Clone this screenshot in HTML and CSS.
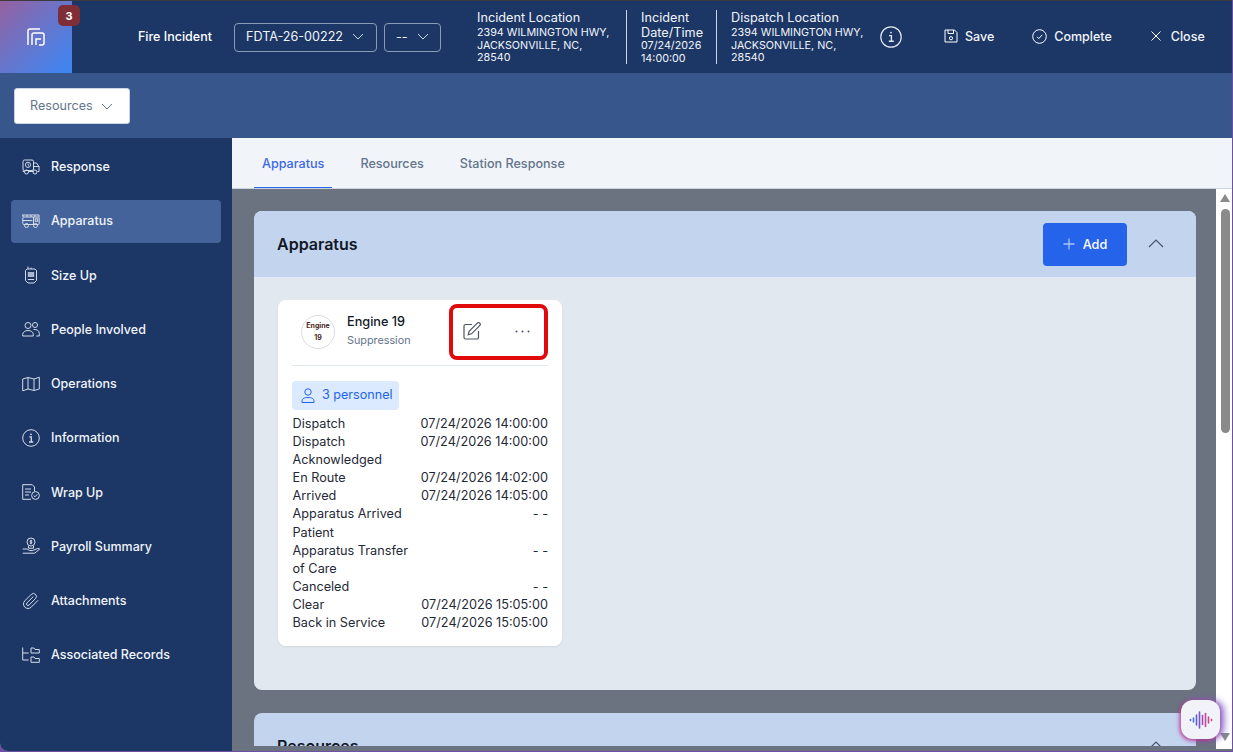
FILE: index.html
```html
<!DOCTYPE html>
<html lang="en">
<head>
<meta charset="utf-8">
<title>Fire Incident</title>
<link rel="stylesheet" href="styles.css">
</head>
<body>
<div class="app">
  <header class="topbar">
    <div class="logo">
      <svg class="logo-mark" viewBox="0 0 18 18" fill="none" stroke="#fff" stroke-width="1.5"><path d="M1 17V3a2 2 0 0 1 2-2h10"/><path d="M5 17V7a2 2 0 0 1 2-2h8a2 2 0 0 1 2 2v8a2 2 0 0 1-2 2h-3"/><path d="M9 17v-6h5"/></svg>
      <span class="badge">3</span>
    </div>
    <div class="title">Fire Incident</div>
    <button class="select select-id">FDTA-26-00222<svg class="chev" viewBox="0 0 12 7"><path d="M1 1l5 5 5-5"/></svg></button>
    <button class="select select-dash">--<svg class="chev" viewBox="0 0 12 7"><path d="M1 1l5 5 5-5"/></svg></button>
    <div class="info info-a">
      <div class="info-label">Incident Location</div>
      <div class="info-text">2394 WILMINGTON HWY, JACKSONVILLE, NC, 28540</div>
    </div>
    <div class="info info-b">
      <div class="info-label">Incident Date/Time</div>
      <div class="info-text">07/24/2026 14:00:00</div>
    </div>
    <div class="info info-c">
      <div class="info-label">Dispatch Location</div>
      <div class="info-text">2394 WILMINGTON HWY, JACKSONVILLE, NC, 28540</div>
    </div>
    <svg class="info-icon" viewBox="0 0 22 22" fill="none" stroke="#e2e8f0" stroke-width="1.2"><circle cx="11" cy="11" r="10.2"/><path d="M9 9.6h2.4v5.4M8.8 15.2h5" stroke-width="1.4"/><circle cx="11" cy="6.6" r=".9" fill="#e2e8f0" stroke="none"/></svg>
    <div class="action act-save">
      <svg viewBox="0 0 14 14" fill="none" stroke="#fff" stroke-width="1"><path d="M1 1h9.5L13 3.5V13H1z"/><path d="M4 1v3.5h5.5V1"/><circle cx="7" cy="9.2" r="1.6"/></svg>
      <span>Save</span>
    </div>
    <div class="action act-complete">
      <svg viewBox="0 0 15 15" fill="none" stroke="#fff" stroke-width="1"><circle cx="7.5" cy="7.5" r="6.8"/><path d="M5 7.8l1.8 1.8L10.2 5.8"/></svg>
      <span>Complete</span>
    </div>
    <div class="action act-close">
      <svg viewBox="0 0 12 12" fill="none" stroke="#fff" stroke-width="1"><path d="M1.5 1.5l9 9M10.5 1.5l-9 9"/></svg>
      <span>Close</span>
    </div>
  </header>

  <div class="subbar">
    <button class="res-btn">Resources<svg class="chev" viewBox="0 0 12 7"><path d="M1 1l5 5 5-5"/></svg></button>
  </div>

  <div class="body-row">
    <nav class="sidebar">
      <a class="nav-item">
        <svg viewBox="0 0 18 16"><rect x="1" y="1" width="10.5" height="10.5" rx="1.5"/><circle cx="6" cy="5.8" r="2.6"/><path d="M6 4.6v1.3l1 .6M11.5 4h3l2.5 3.5v5h-1.5M11.5 7.500h5.500M1 11.500v1h1.500M7 12.500h4.500"/><circle cx="4.500" cy="13" r="2"/><circle cx="13" cy="13" r="2"/></svg>
        <span>Response</span>
      </a>
      <a class="nav-item active">
        <svg viewBox="0 0 18 14"><path d="M0 1h17M1 3V1M5 3V1M9 3V1M13 3V1M17 3V1"/><rect x=".8" y="3" width="16.400" height="7.500" rx="1"/><path d="M.8 6.500h9.500M11.500 3v7.500"/><rect x="13.300" y="4.800" width="2.400" height="2.400"/><circle cx="4.500" cy="11.500" r="2"/><circle cx="13.500" cy="11.500" r="2"/></svg>
        <span>Apparatus</span>
      </a>
      <a class="nav-item">
        <svg viewBox="0 0 18 18"><path d="M6 3V.5M9 3V1.500"/><path d="M3.500 4.500L5 3h8l1.500 1.500v10L12 17H6l-2.500-2.500z"/><rect x="5.800" y="6" width="6.400" height="5" fill="#a9b6cd" stroke="none"/><path d="M5.800 13.500h6.400"/></svg>
        <span>Size Up</span>
      </a>
      <a class="nav-item">
        <svg viewBox="0 0 18 16"><circle cx="6" cy="4.500" r="3"/><circle cx="13" cy="4" r="2.500"/><path d="M.7 15v-1.500C.7 11 3 9.500 6 9.500s5.300 1.500 5.300 4V15zM11.500 8.500c3.500-.5 5.800 1.500 5.800 4V15h-3"/></svg>
        <span>People Involved</span>
      </a>
      <a class="nav-item">
        <svg viewBox="0 0 18 15"><path d="M.7 2.500L6 1l6 1.500L17.300.7v11.800L12 14l-6-1.500-5.300 1.800zM6 1v11.500M12 2.500V14"/></svg>
        <span>Operations</span>
      </a>
      <a class="nav-item">
        <svg viewBox="0 0 18 18"><circle cx="9" cy="9" r="8.300"/><path d="M7.300 7.800h2v5M7 13h4.200" stroke-width="1.300"/><circle cx="9" cy="5.300" r=".9" fill="#d5dce8" stroke="none"/></svg>
        <span>Information</span>
      </a>
      <a class="nav-item">
        <svg viewBox="0 0 18 16"><path d="M9 15.300H.7V.7h9.600l2.200 2.300V7.500"/><path d="M3 5h6M3 8h6M3 11h4"/><circle cx="13.500" cy="11.500" r="3.900"/><path d="M11.700 11.500l1.300 1.300 2.300-2.500"/></svg>
        <span>Wrap Up</span>
      </a>
      <a class="nav-item">
        <svg viewBox="0 0 18 17"><circle cx="9" cy="4.500" r="4"/><path d="M9 2.300v4.400M10.200 3.300H8.500a.8.800 0 0 0 0 1.200h1a.8.800 0 0 1 0 1.200H7.800M6.500 8.500v2.200h5V8.500M.7 11.500h4.500l2.500 1.500h3l5-2 2 .5-5 4.200H.7"/></svg>
        <span>Payroll Summary</span>
      </a>
      <a class="nav-item">
        <svg class="clip" viewBox="0 0 24 24"><path d="M21.440 11.050l-9.190 9.190a6 6 0 0 1-8.490-8.490l8.570-8.570A4 4 0 1 1 18 8.840l-8.590 8.570a2 2 0 0 1-2.830-2.830l8.490-8.480"/></svg>
        <span>Attachments</span>
      </a>
      <a class="nav-item">
        <svg viewBox="0 0 18 16"><path d="M.7.500v12.500h6M.7 6h6"/><path d="M9 1h3l1 1.500h4.300V6H9zM9 10h3l1 1.500h4.300V15.300H9z"/></svg>
        <span>Associated Records</span>
      </a>
    </nav>

    <main class="main">
      <div class="tabs">
        <div class="tab tab-active">Apparatus</div>
        <div class="tab">Resources</div>
        <div class="tab">Station Response</div>
      </div>
      <div class="scroll-row">
        <div class="content">
          <section class="panel panel-first">
            <div class="panel-head">
              <h2>Apparatus</h2>
              <button class="add-btn"><svg viewBox="0 0 12 12" fill="none" stroke="#a9c4f5" stroke-width="1.3"><path d="M6 .5v11M.5 6h11"/></svg>Add</button>
              <svg class="collapse" viewBox="0 0 16 9"><path d="M1 8l7-7 7 7"/></svg>
            </div>
            <div class="panel-body">
              <article class="card">
                <div class="card-head">
                  <div class="avatar"><span>Engine</span><span>19</span></div>
                  <div class="card-name">
                    <div class="name">Engine 19</div>
                    <div class="type">Suppression</div>
                  </div>
                  <div class="card-tools">
                    <svg class="edit" viewBox="0 0 18 18" fill="none" stroke="#4b5563" stroke-width="1.200"><path d="M9 2.500H2.500a1.500 1.500 0 0 0-1.500 1.500v11.500A1.500 1.500 0 0 0 2.500 17h11.500a1.500 1.500 0 0 0 1.500-1.500V9"/><path d="M14.300 1.200a1.500 1.500 0 0 1 2.400 2.400L8.500 11.800l-3.300.9.900-3.300z"/></svg>
                    <svg class="dots" viewBox="0 0 15 3" fill="#4b5563"><circle cx="1.500" cy="1.500" r="1"/><circle cx="7.500" cy="1.500" r="1"/><circle cx="13.500" cy="1.500" r="1"/></svg>
                  </div>
                </div>
                <div class="pill">
                  <svg viewBox="0 0 14 15" fill="none" stroke="#2563eb" stroke-width="1"><circle cx="7" cy="4" r="3.200"/><path d="M1 14.500v-1.500c0-2.500 2.500-3.500 6-3.500s6 1 6 3.500v1.500z"/></svg>
                  <span>3 personnel</span>
                </div>
                <dl class="times">
                  <dt>Dispatch</dt><dd>07/24/2026 14:00:00</dd>
                  <dt>Dispatch Acknowledged</dt><dd>07/24/2026 14:00:00</dd>
                  <dt>En Route</dt><dd>07/24/2026 14:02:00</dd>
                  <dt>Arrived</dt><dd>07/24/2026 14:05:00</dd>
                  <dt>Apparatus Arrived Patient</dt><dd>- -</dd>
                  <dt>Apparatus Transfer of Care</dt><dd>- -</dd>
                  <dt>Canceled</dt><dd>- -</dd>
                  <dt>Clear</dt><dd>07/24/2026 15:05:00</dd>
                  <dt>Back in Service</dt><dd>07/24/2026 15:05:00</dd>
                </dl>
              </article>
            </div>
          </section>
          <section class="panel">
            <div class="panel-head">
              <h2>Resources</h2>
              <svg class="collapse" viewBox="0 0 16 9"><path d="M1 8l7-7 7 7"/></svg>
            </div>
          </section>
        </div>
        <div class="scrollbar">
          <span class="arrow arrow-up"></span>
          <span class="thumb"></span>
          <span class="arrow arrow-down"></span>
        </div>
      </div>
    </main>
  </div>
  <button class="fab" aria-label="Voice">
    <svg viewBox="0 0 24 18" fill="none" stroke-width="1.600" stroke-linecap="round">
      <path d="M1.500 8.500v1" stroke="#4f6fe0"/><path d="M4.500 7v4" stroke="#4f6fe0"/><path d="M7.500 4v10" stroke="#5a60d8"/><path d="M10.500 1v16" stroke="#7a55c8"/><path d="M13.500 4.500v9" stroke="#a04cb0"/><path d="M16.500 2.500v13" stroke="#c0479f"/><path d="M19.500 6v6" stroke="#d0468f"/><path d="M22.500 8.500v1" stroke="#d8447f"/>
    </svg>
  </button>
</div>
</body>
</html>
```

FILE: styles.css
```css
* { box-sizing: border-box; }
html, body { margin: 0; height: 100%; overflow: hidden; }
body { background: #6d4fa5; font-family: Inter, "Liberation Sans", sans-serif; }
button { font-family: inherit; cursor: pointer; }

.app {
  position: relative;
  width: 1232px;
  height: 751px;
  border-top: 1px solid #3d3a3c;
  display: flex;
  flex-direction: column;
  overflow: hidden;
  border-bottom-left-radius: 8px;
}

/* top bar */
.topbar {
  height: 72px;
  flex: none;
  background: #1c3666;
  color: #fff;
  display: flex;
  align-items: center;
}
.logo {
  position: relative;
  width: 72px;
  height: 72px;
  flex: none;
  background: linear-gradient(135deg, #96619f 0%, #6a74c8 45%, #3b87f6 100%);
  display: flex;
  align-items: center;
  justify-content: center;
}
.logo-mark { width: 18px; height: 18px; }
.badge {
  position: absolute;
  left: 58px;
  top: 4px;
  width: 22px;
  height: 21px;
  border-radius: 5px;
  background: #7f2d36;
  font-size: 11px;
  font-weight: 700;
  display: flex;
  align-items: center;
  justify-content: center;
}
.title { margin: 0 0 2px 66px; width: 96px; flex: none; font-size: 12.5px; font-weight: 500; color: #fff; }
.select {
  height: 29px;
  flex: none;
  margin-top: 1px;
  background: transparent;
  border: 1px solid #8a9bb8;
  border-radius: 4px;
  color: #f1f5f9;
  font-size: 12.6px;
  display: flex;
  align-items: center;
  padding: 0 0 2px 11px;
}
.select-id { width: 143px; gap: 9px; }
.select-dash { width: 57px; margin-left: 7px; gap: 9px; }
.chev { width: 12px; height: 7px; fill: none; stroke: #cbd5e1; stroke-width: 1; flex: none; }

.info { flex: none; height: 54px; line-height: 15px; color: #f1f5f9; }
.info-label { font-size: 12.7px; }
.info-text { font-size: 10.75px; line-height: 12.5px; margin-top: 2px; }
.info-a { margin-left: 36px; width: 150px; padding: 0 10px 0 0; border-right: 1px solid #cbd5e1; }
.info-b { width: 90px; padding: 0 8px 0 14px; border-right: 1px solid #cbd5e1; }
.info-b .info-text { margin-top: -1px; line-height: 13px; }
.info-c { width: 148px; padding: 0 0 0 14px; }
.info-icon { width: 22px; height: 22px; flex: none; margin-left: 15px; }

.action { display: flex; align-items: center; gap: 7px; font-size: 12.5px; font-weight: 500; color: #f1f5f9; flex: none; margin-bottom: 2px; }
.act-save { margin-left: 42px; }
.act-save svg { width: 14px; height: 14px; }
.act-complete { margin-left: 38px; }
.act-complete svg { width: 15px; height: 15px; }
.act-close { margin-left: 38px; gap: 9px; }
.act-close svg { width: 12px; height: 12px; }

/* sub bar */
.subbar {
  height: 65px;
  flex: none;
  background: #37568c;
  display: flex;
  align-items: center;
  padding-left: 14px;
}
.res-btn {
  width: 116px;
  height: 36px;
  margin-top: 1px;
  background: #fff;
  border: 1px solid #cbd5e1;
  border-radius: 3px;
  color: #64748b;
  font-size: 12.6px;
  display: flex;
  align-items: center;
  padding: 0 0 2px 15px;
  gap: 8px;
}
.res-btn .chev { stroke: #64748b; margin-top: 2px; }

.body-row { flex: 1; display: flex; min-height: 0; background: #6b7280; }

/* sidebar */
.sidebar {
  width: 232px;
  flex: none;
  background: #1c3666;
  padding: 8px 11px 0;
  display: flex;
  flex-direction: column;
  gap: 11.25px;
  border-bottom-left-radius: 8px;
}
.nav-item {
  height: 43px;
  flex: none;
  display: flex;
  align-items: center;
  gap: 11px;
  padding-left: 11px;
  padding-bottom: 2px;
  border-radius: 4px;
  color: #f1f5f9;
  font-size: 12.5px;
  font-weight: 500;
}
.nav-item svg {
  width: 18px;
  height: 18px;
  flex: none;
  fill: none;
  stroke: #d5dce8;
  stroke-width: 1;
}
.nav-item svg.clip { stroke-width: 1.330; }
.nav-item.active { background: #44639a; }

/* main */
.main { flex: 1; min-width: 0; display: flex; flex-direction: column; }
.tabs {
  height: 51px;
  flex: none;
  background: #f1f5f9;
  border-bottom: 1px solid #cbd5e1;
  display: flex;
  padding-left: 22px;
}
.tab {
  height: 50px;
  padding: 0 8px;
  margin-right: 20px;
  display: flex;
  align-items: center;
  font-size: 12.6px;
  font-weight: 500;
  color: #64748b;
}
.tab-active { color: #3b67e8; box-shadow: inset 0 -1px 0 #2563eb; }

.scroll-row { flex: 1; min-height: 0; display: flex; }
.content {
  flex: 1;
  min-width: 0;
  margin-bottom: 5px;
  padding: 22px 20px 0 22px;
  overflow: hidden;
  display: flex;
  flex-direction: column;
  gap: 23px;
}
.panel { border-radius: 8px; overflow: hidden; flex: none; background: #e2e8f0; }
.panel-first { height: 479px; }
.panel-head {
  height: 66px;
  background: #c3d4ee;
  display: flex;
  align-items: center;
  padding: 0 32px 0 23px;
}
.panel-head h2 { margin: 0; flex: 1; font-size: 16px; line-height: 20px; font-weight: 600; color: #111827; }
.add-btn {
  width: 84px;
  height: 43px;
  background: #2563eb;
  border: none;
  border-radius: 4px;
  color: #fff;
  font-size: 12.7px;
  font-weight: 500;
  display: flex;
  align-items: center;
  justify-content: center;
  gap: 8px;
  margin-right: 21px;
}
.add-btn svg { width: 12px; height: 12px; }
.collapse { width: 16px; height: 9px; margin-bottom: 2px; fill: none; stroke: #475569; stroke-width: 1.2; flex: none; }
.panel-body { padding: 23px 24px; }

/* card */
.card {
  width: 284px;
  height: 346px;
  background: #fff;
  border-radius: 8px;
  padding: 0 14px;
  box-shadow: 0 1px 2px rgba(15, 23, 42, .08);
}
.card-head {
  height: 66px;
  border-bottom: 1px solid #e2e8f0;
  display: flex;
  align-items: flex-start;
  position: relative;
}
.avatar {
  width: 34px;
  height: 34px;
  margin: 15px 0 0 9px;
  flex: none;
  border: 1px solid #d8dde4;
  border-radius: 50%;
  display: flex;
  flex-direction: column;
  align-items: center;
  justify-content: center;
  gap: 4px;
  font-size: 7px;
  line-height: 8px;
  font-weight: 700;
  color: #4b1f22;
}
.card-name { margin: 13px 0 0 12px; }
.name { font-size: 12.7px; line-height: 17px; font-weight: 500; color: #111827; }
.type { font-size: 10.8px; line-height: 14px; margin-top: 4px; color: #64748b; }
.card-tools {
  position: absolute;
  left: 157px;
  top: 4px;
  width: 99px;
  height: 56px;
  border: 4px solid #e00a0a;
  border-radius: 8px;
}
.edit { position: absolute; left: 10px; top: 14px; width: 18px; height: 18px; }
.dots { position: absolute; left: 62px; top: 22px; width: 15px; height: 3px; }
.pill {
  width: 107px;
  height: 29px;
  margin-top: 15px;
  background: #dbeafe;
  border-radius: 4px;
  display: flex;
  align-items: center;
  gap: 7px;
  padding-left: 9px;
  font-size: 12.6px;
  color: #2563eb;
}
.pill span { margin-bottom: 3px; }
.pill svg { width: 14px; height: 15px; flex: none; }
.times {
  margin: 5px 0 0;
  display: grid;
  grid-template-columns: 120px 1fr;
  font-size: 12.7px;
  line-height: 18.1px;
  color: #1f2937;
}
.times dt, .times dd { margin: 0; }
.times dt { padding-left: .5px; }
.times dd { text-align: right; white-space: nowrap; }

/* scrollbar */
.scrollbar {
  width: 16px;
  flex: none;
  background: #fff;
  margin-bottom: 2px;
  display: flex;
  flex-direction: column;
  align-items: center;
}
.thumb { width: 9px; height: 224px; margin-top: 7px; background: #8a8a8a; border-radius: 5px; margin-left: 2px; }
.arrow { width: 0; height: 0; border-left: 5.5px solid transparent; border-right: 5.5px solid transparent; margin-left: 2px; }
.arrow-up { border-bottom: 8px solid #8a8a8a; margin-top: 5px; }
.arrow-down { border-top: 8px solid #8a8a8a; margin-top: auto; margin-bottom: 8px; }

/* floating voice button */
.fab {
  position: absolute;
  left: 1181px;
  top: 699px;
  width: 39px;
  height: 39px;
  border: none;
  border-radius: 12px;
  background: #f1f3f8;
  box-shadow: -1px 1px 4px #c42b8f, 4px 0 7px rgba(122, 91, 200, .9);
  display: flex;
  align-items: center;
  justify-content: center;
  padding: 0;
}
.fab svg { width: 24px; height: 18px; }
```
